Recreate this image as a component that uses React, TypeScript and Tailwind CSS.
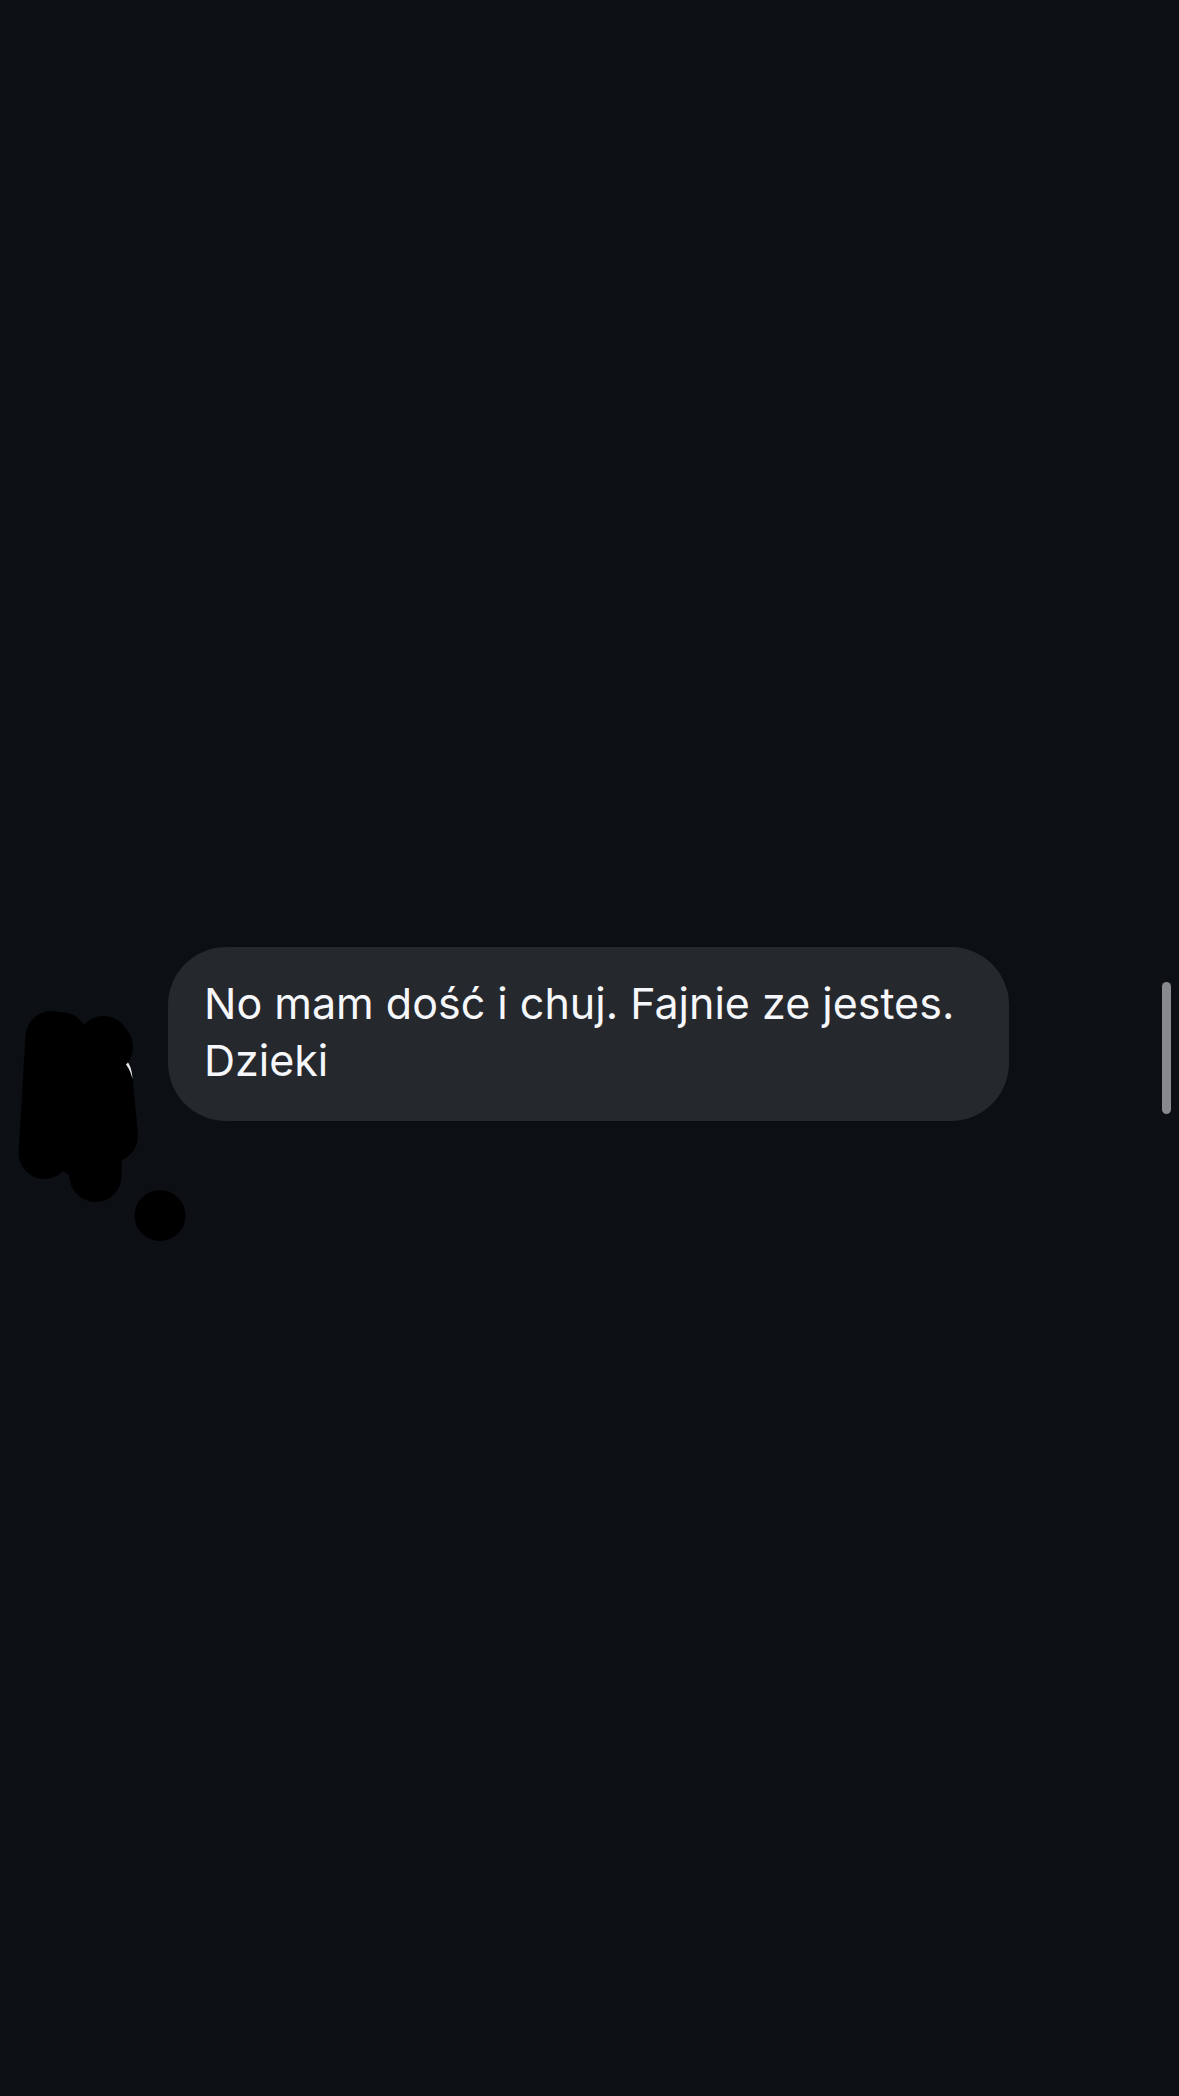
function AvatarScribble() {
  return (
    <svg
      className="h-[174px] w-[168px] shrink-0 overflow-visible"
      viewBox="0 947 168 174"
      fill="none"
      stroke="#000"
      strokeWidth="52"
      strokeLinecap="round"
      strokeLinejoin="round"
      aria-hidden="true"
    >
      <path d="M44.5 1153 51.5 1037 61 1038 70 1048 78 1150" />
      <path d="M103.500 1042 107 1047 90 1082" />
      <path d="M107 1083 112 1136 92 1130 93 1165 95.500 1176 96 1150 80 1060" />
      <circle cx="160" cy="1215.500" r="25.500" fill="#000" stroke="none" />
      {/* sliver of the avatar left uncovered */}
      <path d="M126 1064.500 128 1062.500C130.500 1066 132 1071 132.500 1079 131 1073 129 1068 126 1064.500Z" fill="#e5e7e8" stroke="none" />
    </svg>
  );
}

export default function App() {
  return (
    <main className="flex min-h-screen w-full items-center justify-between bg-[#0c0f14] pr-2 font-['Inter',sans-serif]">
      <div className="flex items-center pb-7">
        <AvatarScribble />
        <p className="max-w-[841px] rounded-[58px] bg-[#25282d] px-9 pt-7 pb-8 text-[43px] leading-[57px] text-[#f5f7fa]">
          No mam dość i chuj. Fajnie ze jestes. Dzieki
        </p>
      </div>

      {/* Scroll indicator */}
      <div className="h-[132px] w-[9px] shrink-0 rounded-full bg-[#88898d]" />
    </main>
  );
}
